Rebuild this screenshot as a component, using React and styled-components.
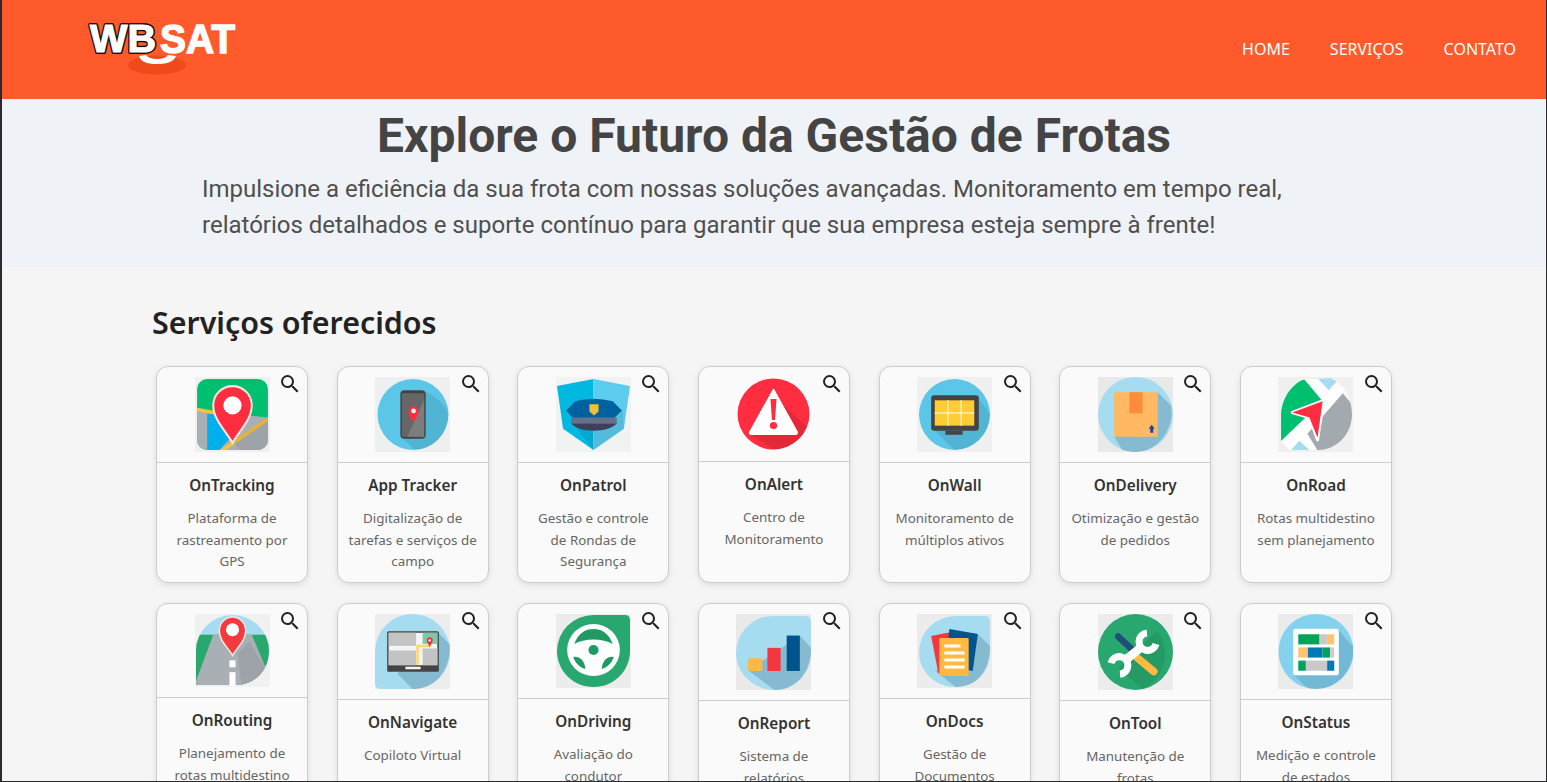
import React from 'react';
import styled, { createGlobalStyle } from 'styled-components';
import { MdSearch } from 'react-icons/md';

const GlobalStyle = createGlobalStyle`
  * { box-sizing: border-box; }
  html, body { margin: 0; padding: 0; background: #f5f5f5; }
`;

const uiFont = `"Noto Sans", "Open Sans", sans-serif`;

const BLUE = '#a6dcf0';
const SKY = '#5bc6e8';
const RED = '#ff2d40';
const GREEN = '#28a86e';

const Pic = styled.svg`
  display: block;
  width: 75px;
  height: ${(p) => p.$h}px;
  margin: 0 auto;
`;

const Art = ({ h, bg = '#eeeeee', children }) => (
  <Pic $h={h} viewBox="0 0 74 74" preserveAspectRatio="none">
    {bg !== 'none' && <rect width="74" height="74" fill={bg} />}
    {children}
  </Pic>
);

const TrackingIcon = ({ h }) => (
  <Art h={h} bg="#f0f0f0">
    <clipPath id="clip-track"><rect x="2" y="2" width="70" height="70" rx="10" /></clipPath>
    <g clipPath="url(#clip-track)">
      <rect x="2" y="2" width="70" height="70" fill="#00c070" />
      <path d="M2 32 L72 40 L72 72 L2 72Z" fill="#a9b0b5" />
      <path d="M12 36 L52 42 L24 72 L12 72Z" fill="#00b0ec" />
      <path d="M2 32 L24 36" fill="none" stroke="#f5c23c" strokeWidth="3.5" />
      <path d="M74 40 L23 75" fill="none" stroke="#f5c23c" strokeWidth="3.5" />
      <path d="M37 64 L72 38 L72 72 L44 72Z" fill="#000" opacity="0.07" />
    </g>
    <path d="M37 65 C31 54 18 42 18 28 C18 17 27 9 37 9 C47 9 56 17 56 28 C56 42 43 54 37 65Z" fill={RED} stroke="#f7e6e0" strokeWidth="2" />
    <circle cx="37" cy="28" r="9" fill="#fff" />
  </Art>
);

const AppIcon = ({ h }) => (
  <Art h={h} bg="#eef0f0">
    <circle cx="37.5" cy="37" r="35" fill={SKY} />
    <path d="M50 14 C62 20 72 30 72 38 C72 56 58 71 40 72 L26 60Z" fill="#000" opacity="0.09" />
    <rect x="25" y="13" width="25" height="48" rx="4" fill="#444" />
    <rect x="26.5" y="16" width="22" height="43" rx="1" fill="#666" />
    <path d="M48.5 22 L48.5 59 L32 59Z" fill="#7d7d7d" />
    <path d="M38 45 C36 41 33 38 33 34 C33 31 35 29 38 29 C41 29 43 31 43 34 C43 38 40 41 38 45Z" fill={RED} />
    <circle cx="38" cy="33.5" r="2.3" fill="#fff" />
  </Art>
);

const PatrolIcon = ({ h }) => (
  <Art h={h} bg="#f1f2f2">
    <path d="M37 2 L1 9 L7 51 L37 72Z" fill="#00b8e0" />
    <path d="M37 2 L73 9 L67 51 L37 72Z" fill="#5ccdee" />
    <path d="M37 72 L20 50 L50 38 L66 32 L67 51Z" fill="#000" opacity="0.08" />
    <path d="M10 33 L19 24 Q37 19 56 24 L65 33 L57 41 L17 41Z" fill="#00619f" />
    <rect x="15" y="40" width="45" height="6" fill="#6a7089" />
    <path d="M15 46 L60 46 C55 51 47 53 37 53 C27 53 20 51 15 46Z" fill="#3e3f5c" />
    <path d="M33 27 L42 27 L42 34 L37.5 38 L33 34Z" fill="#f0c03c" />
  </Art>
);

const AlertIcon = ({ h }) => (
  <Art h={h} bg="none">
    <circle cx="37" cy="37" r="35.5" fill="#ff2d3f" />
    <path d="M46 27 L70 50 C65 62 52 72 37 72.5 L14 57Z" fill="#000" opacity="0.11" />
    <path d="M37 13 L60 55 Q60.5 57 59 57 L15 57 Q13 57 14 55Z" fill="#fff" stroke="#fff" strokeWidth="2" strokeLinejoin="round" />
    <path d="M34 22 L40 22 L38.5 43 L35.5 43Z" fill="#ff2d3f" />
    <circle cx="37" cy="48.5" r="3.6" fill="#ff2d3f" />
  </Art>
);

const WallIcon = ({ h }) => (
  <Art h={h} bg="#f0f0f0">
    <circle cx="37" cy="37" r="35" fill={SKY} />
    <path d="M58 18 L72 36 C72 55 56 72 37 72 L18 53Z" fill="#000" opacity="0.09" />
    <rect x="14" y="18" width="47" height="35" rx="3" fill="#444" />
    <rect x="28" y="53" width="17" height="4" fill="#444" />
    <rect x="17.5" y="23" width="39" height="25" fill="#ffcc33" />
    <path d="M30.5 23 V48 M43.5 23 V48 M17.5 35.5 H56.5" stroke="#fff" strokeWidth="1" />
  </Art>
);

const DeliveryIcon = ({ h }) => (
  <Art h={h} bg="#e9e9e9">
    <circle cx="37" cy="37" r="37" fill={BLUE} />
    <path d="M59 15 L72 28 C76 50 60 74 37 74 C30 74 26 72 24 72 L16 59Z" fill="#3d6e8c" opacity="0.3" />
    <rect x="16" y="15" width="43" height="44" fill="#ffb963" />
    <rect x="31" y="15" width="13" height="21" fill="#ff8c3a" />
    <path d="M53 47 L56 51 L54.5 51 L54.5 55 L51.5 55 L51.5 51 L50 51Z" fill="#1d4a8a" />
  </Art>
);

const RoadIcon = ({ h }) => (
  <Art h={h} bg="#f0f0f0">
    <clipPath id="clip-road"><path d="M3 38 C3 22 13 8 24 3 L52 1 C66 8 73 22 73 37 C73 56 58 72 40 72 L12 72 L3 64Z" /></clipPath>
    <g clipPath="url(#clip-road)">
      <rect width="74" height="74" fill="#fff" />
      <path d="M38 0 L62 0 L50 13Z" fill={BLUE} />
      <path d="M0 66 L0 0 L24 0 L44 24Z" fill="#00c070" />
      <path d="M64 16 L74 28 L74 74 L40 74 L29 56Z" fill="#a2aab0" />
      <path d="M13 72 L21 63 L31 72Z" fill={BLUE} />
    </g>
    <path d="M45 23 L14 35 L31 40 L39 62Z" fill="#fff" stroke="#fff" strokeWidth="3" strokeLinejoin="round" />
    <path d="M44 24 L14 35 L31 40 L39 60Z" fill={RED} />
  </Art>
);

const RoutingIcon = ({ h }) => (
  <Art h={h} bg="#f1f1f1">
    <clipPath id="clip-routing"><path d="M1 37 A36 36 0 0 1 73 37 C73 58 58 72 40 72 L1 72Z" /></clipPath>
    <g clipPath="url(#clip-routing)">
      <rect width="74" height="74" fill={BLUE} />
      <rect y="21" width="74" height="53" fill={GREEN} />
      <path d="M18 21 L56 21 L72 60 L60 74 L1 74 L1 68Z" fill="#a9b0b5" />
      <path d="M42 40 L54 28 L72 60 L60 74 L46 74Z" fill="#000" opacity="0.07" />
    </g>
    <rect x="34" y="47" width="6" height="7" fill="#fff" />
    <rect x="34" y="59" width="6" height="14" fill="#fff" />
    <path d="M37 42 C33 34 24 28 24 17 C24 9 30 3 37 3 C44 3 50 9 50 17 C50 28 41 34 37 42Z" fill="#f33a3f" stroke="#f7e6e0" strokeWidth="1.5" />
    <circle cx="37" cy="16" r="6.5" fill="#fff" />
  </Art>
);

const NavigateIcon = ({ h }) => (
  <Art h={h} bg="#ededed">
    <path d="M0 37 A37 37 0 0 1 74 37 C74 58 58 74 37 74 L6 74 Q0 74 0 68Z" fill={BLUE} />
    <path d="M62 18 L74 30 C74 58 58 74 37 74 L22 59Z" fill="#3d6e8c" opacity="0.3" />
    <rect x="12" y="17" width="51" height="40" rx="1.5" fill="#444" />
    <rect x="13.5" y="18.5" width="48" height="32" fill="#f4f4f4" />
    <rect x="13.5" y="18.5" width="27" height="13" fill="#c4c4c4" />
    <rect x="13.5" y="36" width="27" height="14.5" fill="#c4c4c4" />
    <rect x="47" y="18.5" width="14.5" height="11" fill="#7cc8a8" />
    <rect x="47" y="34" width="14.5" height="16.5" fill="#c4c4c4" />
    <path d="M42 50 V31.5 H54" fill="none" stroke="#ffd966" strokeWidth="2.5" />
    <path d="M54 33 C53 30 51 28 51 26 A3 3 0 0 1 57 26 C57 28 55 30 54 33Z" fill={RED} />
    <circle cx="54" cy="26" r="1.2" fill="#fff" />
    <rect x="30" y="52" width="15" height="2.5" fill="#f4f4f4" />
  </Art>
);

const DrivingIcon = ({ h }) => (
  <Art h={h} bg="#ececec">
    <path d="M1 37 A36 36 0 0 1 37 1 L68 1 Q73 1 73 6 L73 37 C73 57 57 73 37 73 C17 73 1 57 1 37Z" fill={GREEN} />
    <circle cx="37" cy="36" r="26" fill="#fff" />
    <path d="M18 30 C22 19 29 15 37 15 C45 15 52 19 56 30 C46 24 28 24 18 30Z" fill="#1f9a62" />
    <path d="M17 43 C23 42 28 46 29 55 C23 53 19 49 17 43Z" fill="#1f9a62" />
    <path d="M57 43 C51 42 46 46 45 55 C51 53 55 49 57 43Z" fill="#1f9a62" />
    <circle cx="37" cy="36" r="5" fill="#1f9a62" />
  </Art>
);

const ReportIcon = ({ h }) => (
  <Art h={h} bg="#e9e9e9">
    <path d="M0 38 A36 36 0 0 1 36 2 L68 2 Q74 2 74 8 L74 38 C74 58 58 74 38 74 C18 74 0 58 0 38Z" fill={BLUE} />
    <path d="M63 21 L74 33 C74 58 58 74 38 74 L12 55Z" fill="#3d6e8c" opacity="0.3" />
    <rect x="12" y="43" width="14" height="12.5" rx="1" fill="#ffb840" />
    <rect x="31" y="33" width="13" height="22.5" fill="#f4363f" />
    <rect x="50" y="21" width="13" height="34.5" fill="#00548c" />
  </Art>
);

const DocsIcon = ({ h }) => (
  <Art h={h} bg="#ececec">
    <path d="M2 38 A36 36 0 0 1 38 2 L68 2 Q72 2 72 8 L72 38 C72 58 58 73 38 73 C18 73 2 58 2 38Z" fill={BLUE} />
    <path d="M60 20 L72 32 C72 58 58 73 38 73 L18 57Z" fill="#3d6e8c" opacity="0.3" />
    <path d="M14 22 L34 18 L40 56 L21 59Z" fill="#f4363f" />
    <path d="M32 15 L60 20 L55 57 L28 52Z" fill="#00548c" />
    <rect x="22" y="24" width="29" height="38" rx="1" fill="#ffb840" />
    <path d="M27 32 H43 M27 39 H47 M27 46 H47 M27 53 H47" stroke="#fff" strokeWidth="3" />
  </Art>
);

const ToolIcon = ({ h }) => (
  <Art h={h} bg="#ececec">
    <circle cx="37" cy="37" r="37" fill={GREEN} />
    <path d="M58 16 A37 37 0 0 1 44 73 L20 53Z" fill="#000" opacity="0.08" />
    <path d="M20 22 L33 34" stroke="#1f4e79" strokeWidth="6.5" strokeLinecap="round" />
    <path d="M38 42 L55 56" stroke="#ffb840" strokeWidth="7.5" strokeLinecap="round" />
    <path d="M27 45 L43 32" stroke="#fff" strokeWidth="8.5" />
    <path d="M48.3 18.5 A8.5 8.5 0 1 0 57.2 29.2" fill="none" stroke="#fff" strokeWidth="7" />
    <path d="M21.7 58.5 A8.5 8.5 0 1 0 12.8 47.8" fill="none" stroke="#fff" strokeWidth="7" />
  </Art>
);

const StatusIcon = ({ h }) => (
  <Art h={h} bg="#ebebeb">
    <circle cx="37.5" cy="37" r="37" fill="#85d2ef" />
    <path d="M60 16 L74 32 C76 54 58 74 37 74 C34 74 30 73 28 72 L15 60Z" fill="#3d6e8c" opacity="0.25" />
    <rect x="15" y="14.5" width="45" height="46" rx="2.5" fill="#fff" />
    <rect x="20" y="20" width="21" height="10" fill="#00a35c" />
    <rect x="41" y="20" width="7.5" height="10" fill="#c9c9c9" />
    <rect x="48.5" y="20" width="7" height="10" fill="#ffc46b" />
    <rect x="20" y="33" width="9.5" height="10" fill="#ffc46b" />
    <rect x="29.5" y="33" width="14.5" height="10" fill="#0079b8" />
    <rect x="44" y="33" width="7.5" height="10" fill="#00a35c" />
    <rect x="51.5" y="33" width="4" height="10" fill="#d5c8cc" />
    <rect x="20" y="46" width="7.5" height="10" fill="#00a35c" />
    <rect x="27.5" y="46" width="21" height="10" fill="#c9c9c9" />
    <rect x="48.5" y="46" width="7" height="10" fill="#0079b8" />
  </Art>
);

const services = [
  { name: 'OnTracking', desc: 'Plataforma de rastreamento por GPS', h: 75, Icon: TrackingIcon },
  { name: 'App Tracker', desc: 'Digitalização de tarefas e serviços de campo', h: 75, Icon: AppIcon },
  { name: 'OnPatrol', desc: 'Gestão e controle de Rondas de Segurança', h: 75, Icon: PatrolIcon },
  { name: 'OnAlert', desc: 'Centro de Monitoramento', h: 74, Icon: AlertIcon },
  { name: 'OnWall', desc: 'Monitoramento de múltiplos ativos', h: 75, Icon: WallIcon },
  { name: 'OnDelivery', desc: 'Otimização e gestão de pedidos', h: 75, Icon: DeliveryIcon },
  { name: 'OnRoad', desc: 'Rotas multidestino sem planejamento', h: 75, Icon: RoadIcon },
  { name: 'OnRouting', desc: 'Planejamento de rotas multidestino', h: 73, Icon: RoutingIcon },
  { name: 'OnNavigate', desc: 'Copiloto Virtual', h: 75, Icon: NavigateIcon },
  { name: 'OnDriving', desc: 'Avaliação do condutor', h: 74, Icon: DrivingIcon },
  { name: 'OnReport', desc: 'Sistema de relatórios', h: 76, Icon: ReportIcon },
  { name: 'OnDocs', desc: 'Gestão de Documentos', h: 74, Icon: DocsIcon },
  { name: 'OnTool', desc: 'Manutenção de frotas', h: 76, Icon: ToolIcon },
  { name: 'OnStatus', desc: 'Medição e controle de estados', h: 75, Icon: StatusIcon },
];

const Page = styled.div`
  height: 782px;
  overflow: hidden;
  border-left: 2px solid #2b2b2f;
  border-right: 1px solid #2b2b2f;
  border-bottom: 1px solid #2b2b2f;
  background: #f5f5f5;
`;

const Header = styled.header`
  height: 99px;
  padding: 0 30px 0 85px;
  display: flex;
  align-items: center;
  justify-content: space-between;
  background: #ff5a2b;
`;

const Nav = styled.nav`
  display: flex;
  gap: 40px;
  margin-bottom: 2px;
`;

const NavLink = styled.a`
  font-family: ${uiFont};
  font-size: 16px;
  color: #fff;
  text-decoration: none;
`;

const Hero = styled.section`
  height: 168px;
  background: #eff3f8;
`;

const Title = styled.h1`
  margin: 0;
  font-family: Roboto, sans-serif;
  font-size: 48px;
  font-weight: 700;
  line-height: 73px;
  text-align: center;
  color: #444;
`;

const Lead = styled.p`
  margin: -1px 0 0 200px;
  width: 1100px;
  font-family: Roboto, sans-serif;
  font-size: 24px;
  line-height: 36px;
  color: #4f4f4f;
`;

const Main = styled.main`
  padding: 36px 0 0 150px;
`;

const SectionTitle = styled.h2`
  margin: 0 0 23px;
  font-family: ${uiFont};
  font-size: 30.4px;
  font-weight: 600;
  line-height: 40px;
  color: #222;
`;

const Grid = styled.div`
  margin-left: 4px;
  display: grid;
  grid-template-columns: repeat(7, 152px);
  column-gap: 28.67px;
  row-gap: 20.5px;
`;

const Card = styled.article`
  position: relative;
  background: #fafafa;
  border: 1px solid #ccc;
  border-radius: 12px;
  box-shadow: 0 2px 6px rgba(0, 0, 0, 0.1);
  text-align: center;
`;

const CardTop = styled.div`
  padding: 10px 0;
  border-bottom: 1px solid #ccc;
`;

const Zoom = styled(MdSearch)`
  position: absolute;
  top: 5px;
  right: 5px;
  width: 24px;
  height: 24px;
  color: #222;
`;

const CardBody = styled.div`
  padding: 10px 10.5px 9px;
`;

const CardName = styled.h3`
  margin: 0 0 11px;
  font-family: ${uiFont};
  font-size: 15.3px;
  font-weight: 600;
  line-height: 24px;
  color: #333;
`;

const CardDesc = styled.p`
  margin: 0;
  font-family: ${uiFont};
  font-size: 13.4px;
  line-height: 21.5px;
  color: #666;
`;

const Logo = () => (
  <svg width="152" height="56" viewBox="0 0 152 56" style={{ display: 'block' }}>
    <ellipse cx="70" cy="43" rx="29" ry="9.5" fill="#f04a1a" />
    <path d="M52 34 Q54 42 70 42 Q86 42 89 34 L81 33 Q78 37 70 37 Q62 37 59 33Z" fill="#fff" />
    <text x="3" y="30" fontFamily="Liberation Sans" fontWeight="700" fontSize="38" textLength="66" lengthAdjust="spacingAndGlyphs" fill="#fff" stroke="#111" strokeWidth="4" strokeLinejoin="round">WB</text>
    <text x="3" y="30" fontFamily="Liberation Sans" fontWeight="700" fontSize="38" textLength="66" lengthAdjust="spacingAndGlyphs" fill="#fff" stroke="#fff" strokeWidth="1.2">WB</text>
    <text x="73" y="30.5" fontFamily="Liberation Sans" fontWeight="700" fontSize="41" textLength="75" lengthAdjust="spacingAndGlyphs" fill="#fff" stroke="#fff" strokeWidth="1.4">SAT</text>
  </svg>
);

const App = () => (
  <Page>
    <GlobalStyle />
    <Header>
      <Logo />
      <Nav>
        <NavLink href="#home">HOME</NavLink>
        <NavLink href="#servicos">SERVIÇOS</NavLink>
        <NavLink href="#contato">CONTATO</NavLink>
      </Nav>
    </Header>
    <Hero>
      <Title>Explore o Futuro da Gestão de Frotas</Title>
      <Lead>
        Impulsione a eficiência da sua frota com nossas soluções avançadas. Monitoramento em tempo real,
        relatórios detalhados e suporte contínuo para garantir que sua empresa esteja sempre à frente!
      </Lead>
    </Hero>
    <Main>
      <SectionTitle>Serviços oferecidos</SectionTitle>
      <Grid>
        {services.map(({ name, desc, h, Icon }) => (
          <Card key={name}>
            <CardTop>
              <Icon h={h} />
            </CardTop>
            <Zoom />
            <CardBody>
              <CardName>{name}</CardName>
              <CardDesc>{desc}</CardDesc>
            </CardBody>
          </Card>
        ))}
      </Grid>
    </Main>
  </Page>
);

export default App;
